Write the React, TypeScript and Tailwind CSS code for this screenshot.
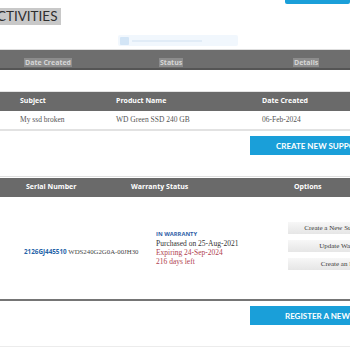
const sans = "font-['Open_Sans',sans-serif]";
const serif = "font-['Liberation_Serif',serif]";

const HeaderCell = ({ label, className }: { label: string; className: string }) => (
  <div className={`${className} shrink-0 text-[7px] font-bold text-white ${sans}`}>{label}</div>
);

const App = () => {
  return (
    <div className="w-[350px] h-[350px] overflow-hidden bg-white relative">
      {/* Title + top button */}
      <div className="flex items-start h-[35px]">
        <div className="mt-[8px] ml-[-13px] bg-[#c8c8c8] h-[17px] pl-[1px] pr-[4px] flex items-center">
          <span className="text-[13.5px] leading-none text-[#2e2e2e] font-['Lato',sans-serif] whitespace-nowrap">
            ACTIVITIES
          </span>
        </div>
        <div className="ml-auto w-[65px] h-[4px] bg-[#1a9fd9] rounded-b-[2px]" />
      </div>

      {/* faint filter */}
      <div className="ml-[118px] w-[120px] h-[11px] bg-[#f1f7fd] rounded-[2px] flex items-center gap-[3px] px-[2px]">
        <div className="w-[9px] h-[8px] bg-[#d3e5f6] rounded-[1px]" />
        <div className="w-[70px] h-[2px] bg-[#e1ecf7]" />
      </div>

      {/* Table 1 header */}
      <div className="mt-[3px] border-t border-[#dedede] bg-[#6e6e6e] h-[21px] border-b-2 border-b-[#555] flex items-center">
        <div className="ml-[24px] w-[135px] shrink-0">
          <span className={`bg-[#8c8c8c] px-[1px] text-[7px] font-bold text-[#d6d6d6] ${sans}`}>Date Created</span>
        </div>
        <div className="w-[134px] shrink-0">
          <span className={`bg-[#8c8c8c] px-[1px] text-[7px] font-bold text-[#d6d6d6] ${sans}`}>Status</span>
        </div>
        <div className="shrink-0">
          <span className={`bg-[#8c8c8c] px-[1px] text-[7px] font-bold text-[#d6d6d6] ${sans}`}>Details</span>
        </div>
      </div>

      {/* Table 2 */}
      <div className="mt-[21px] border-t border-[#e4e4e4]">
        <div className="bg-[#6a6a6a] h-[19px] flex items-center">
          <HeaderCell label="Subject" className="ml-[20px] w-[96px]" />
          <HeaderCell label="Product Name" className="w-[146px]" />
          <HeaderCell label="Date Created" className="w-[100px]" />
        </div>
        <div className={`h-[20px] flex items-center border-b-2 border-[#e2e2e2] text-[7.5px] text-[#555] ${serif}`}>
          <div className="ml-[20px] w-[96px] shrink-0">My ssd broken</div>
          <div className="w-[146px] shrink-0">WD Green SSD 240 GB</div>
          <div className="w-[100px] shrink-0">06-Feb-2024</div>
        </div>
      </div>
      <div className="mt-[5px] ml-[250px] w-[150px] h-[19px] bg-[#1a9fd9] flex items-center pl-[26px] shrink-0">
        <span className="text-[8px] font-bold text-white whitespace-nowrap font-['Lato',sans-serif]">CREATE NEW SUPPORT CASE</span>
      </div>

      {/* Table 3 */}
      <div className="mt-[21px] border-t border-[#e0e0e0] pt-[1px]">
        <div className="bg-[#6a6a6a] h-[19px] flex items-center">
          <HeaderCell label="Serial Number" className="ml-[26px] w-[105px]" />
          <HeaderCell label="Warranty Status" className="w-[163px]" />
          <HeaderCell label="Options" className="w-[80px]" />
        </div>
        <div className="h-[104px] border-b-2 border-[#757575] flex items-center">
          <div className="ml-[24px] w-[132px] shrink-0 whitespace-nowrap leading-none">
            <span className={`text-[6.3px] font-bold text-[#2563a8] ${sans}`}>2126GJ445510</span>
            <span className={`text-[6.8px] text-[#444] ${serif}`}> WDS240G2G0A-00JH30</span>
          </div>
          <div className={`w-[132px] shrink-0 flex flex-col text-[7.5px] leading-[9px] ${serif}`}>
            <span className={`text-[5.8px] font-bold text-[#2f5fa8] ${sans}`}>IN WARRANTY</span>
            <span className="text-[#333]">Purchased on 25-Aug-2021</span>
            <span className="text-[#b0424f]">Expiring 24-Sep-2024</span>
            <span className="text-[#b0424f]">216 days left</span>
          </div>
          <div className={`w-[110px] shrink-0 flex flex-col gap-[6px] mt-[-4px] text-[7px] text-[#3a3a3a] ${serif}`}>
            <div className="h-[12px] flex items-center justify-center bg-gradient-to-b from-[#f7f7f7] to-[#e6e6e6] whitespace-nowrap">Create a New Support Case</div>
            <div className="h-[12px] flex items-center justify-center bg-gradient-to-b from-[#f7f7f7] to-[#e6e6e6] whitespace-nowrap">Update Warranty</div>
            <div className="h-[12px] flex items-center justify-center bg-gradient-to-b from-[#f7f7f7] to-[#e6e6e6] whitespace-nowrap">Create an RMA</div>
          </div>
        </div>
      </div>
      <div className="mt-[5px] ml-[250px] w-[150px] h-[19px] bg-[#1a9fd9] flex items-center pl-[35px]">
        <span className="text-[8px] font-bold text-white whitespace-nowrap font-['Lato',sans-serif]">REGISTER A NEW PRODUCT</span>
      </div>
      <div className="mt-[21px] border-t border-[#ececec]" />
    </div>
  );
};

export default App;
